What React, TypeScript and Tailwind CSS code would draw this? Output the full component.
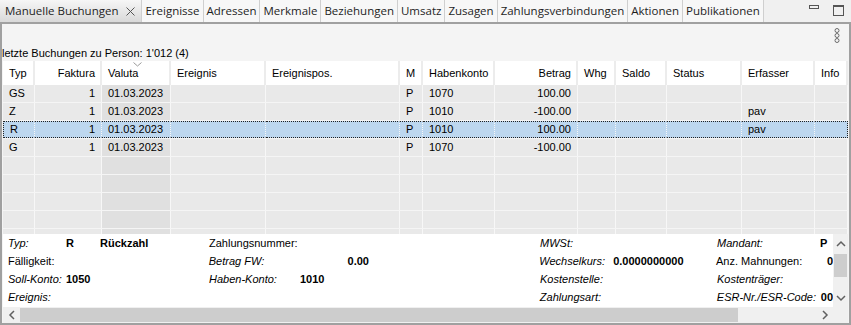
import React from "react";

const tabs = [
  "Ereignisse",
  "Adressen",
  "Merkmale",
  "Beziehungen",
  "Umsatz",
  "Zusagen",
  "Zahlungsverbindungen",
  "Aktionen",
  "Publikationen",
];

type Col = { k: string; w: string; right?: boolean; sorted?: boolean };
const cols: Col[] = [
  { k: "Typ", w: "w-[32px]" },
  { k: "Faktura", w: "w-[67px]", right: true },
  { k: "Valuta", w: "w-[69px]", sorted: true },
  { k: "Ereignis", w: "w-[95px]" },
  { k: "Ereignispos.", w: "w-[134px]" },
  { k: "M", w: "w-[23px]" },
  { k: "Habenkonto", w: "w-[72px]" },
  { k: "Betrag", w: "w-[83px]", right: true },
  { k: "Whg", w: "w-[38px]" },
  { k: "Saldo", w: "w-[51px]" },
  { k: "Status", w: "w-[75px]" },
  { k: "Erfasser", w: "w-[73px]" },
  { k: "Info", w: "w-[33px]" },
];

const rows: string[][] = [
  ["GS", "1", "01.03.2023", "", "", "P", "1070", "100.00", "", "", "", "", ""],
  ["Z", "1", "01.03.2023", "", "", "P", "1010", "-100.00", "", "", "", "pav", ""],
  ["R", "1", "01.03.2023", "", "", "P", "1010", "100.00", "", "", "", "pav", ""],
  ["G", "1", "01.03.2023", "", "", "P", "1070", "-100.00", "", "", "", "", ""],
  ["", "", "", "", "", "", "", "", "", "", "", "", ""],
  ["", "", "", "", "", "", "", "", "", "", "", "", ""],
  ["", "", "", "", "", "", "", "", "", "", "", "", ""],
  ["", "", "", "", "", "", "", "", "", "", "", "", ""],
  ["", "", "", "", "", "", "", "", "", "", "", "", ""],
];

function Kebab() {
  return (
    <svg width="8" height="16" viewBox="0 0 8 16" fill="none">
      <circle cx="4" cy="2.5" r="2" stroke="#6b6b6b" strokeWidth="1" />
      <circle cx="4" cy="7.5" r="2" stroke="#6b6b6b" strokeWidth="1" />
      <circle cx="4" cy="12.5" r="2" stroke="#6b6b6b" strokeWidth="1" />
    </svg>
  );
}

function Chevron({ dir }: { dir: "up" | "down" | "left" | "right" }) {
  const d =
    dir === "up"
      ? "M1 6 L5 2 L9 6"
      : dir === "down"
      ? "M1 2 L5 6 L9 2"
      : dir === "left"
      ? "M6 1 L2 5 L6 9"
      : "M2 1 L6 5 L2 9";
  const w = dir === "up" || dir === "down" ? 10 : 8;
  const h = dir === "up" || dir === "down" ? 8 : 10;
  return (
    <svg width={w} height={h} viewBox={`0 0 ${w} ${h}`} fill="none">
      <path d={d} stroke="#606060" strokeWidth="1.5" />
    </svg>
  );
}

export default function App() {
  return (
    <div className="w-[851px] h-[325px] overflow-hidden bg-[#f0f0f0] text-black [font-family:'Liberation_Sans',Arial,sans-serif]">
      {/* Tab bar */}
      <div className="h-[22px] flex items-stretch bg-[#f0f0f0] [font-family:'Open_Sans',sans-serif] text-[11.5px] text-[#1e1e1e]">
        <div className="flex items-center pl-[5px] pr-[6px] border-r border-[#cfcfcf] bg-gradient-to-b from-[#f6f6f6] to-[#d9d9d9]">
          <span>Manuelle Buchungen</span>
          <span className="ml-[8px] text-[#444]">
            <svg width="9" height="9" viewBox="0 0 9 9">
              <path d="M0.5 0.5 L8.5 8.5 M8.5 0.5 L0.5 8.5" stroke="#555" strokeWidth="1" />
            </svg>
          </span>
        </div>
        {tabs.map((t) => (
          <div
            key={t}
            className="flex items-center px-[3px] border-r border-[#cfcfcf] bg-[#f7f7f7]"
          >
            {t}
          </div>
        ))}
        <div className="flex-1 flex items-start justify-end pt-[5px] pr-[7px] gap-[14px]">
          <div className="w-[10px] h-[4px] border border-[#555] mt-[0px]" />
          <div className="w-[11px] h-[11px] border border-[#555] border-t-2" />
        </div>
      </div>

      {/* Body */}
      <div className="h-[303px] border-2 border-[#a0a0a0] bg-[#f4f4f4] flex flex-col px-[1px]">
        <div className="h-[22px] flex justify-end items-start pt-[4px] pr-[7px]">
          <Kebab />
        </div>
        <div className="h-[15px] text-[11px] leading-[15px] -ml-[1px]">
          letzte Buchungen zu Person: 1'012 (4)
        </div>

        {/* Grid header */}
        <div className="h-[24px] flex bg-white text-[11px]">
          {cols.map((c) => (
            <div
              key={c.k}
              className={`${c.w} shrink-0 relative flex items-center border-r-2 border-[#ececec] ${
                c.right ? "justify-end pr-[5px]" : "pl-[6px]"
              }`}
            >
              {c.sorted && (
                <span className="absolute top-[1px] left-[31px]">
                  <svg width="9" height="5" viewBox="0 0 9 5" fill="none">
                    <path d="M0.5 0.5 L4.5 4 L8.5 0.5" stroke="#9a9a9a" strokeWidth="1" />
                  </svg>
                </span>
              )}
              {c.k}
            </div>
          ))}
        </div>

        {/* Grid rows */}
        <div className="h-[149px] overflow-hidden text-[11px] bg-[#f4f4f4]">
          {rows.map((r, i) => {
            const sel = i === 2;
            return (
              <div key={i} className="h-[18px] flex border-b border-[#f5f5f5]">
                {cols.map((c, j) => (
                  <div
                    key={c.k}
                    className={`${c.w} shrink-0 flex items-center border-r border-[#f7f7f7] ${
                      c.right ? "justify-end pr-[6px]" : "pl-[6px]"
                    } ${
                      sel
                        ? "bg-[#bdd7ef] border-y border-y-[#222] border-dotted"
                        : c.sorted
                        ? "bg-[#e0e0e0]"
                        : "bg-[#e9e9e9]"
                    } ${sel && j === 0 ? "border-l border-l-[#222]" : ""} ${
                      sel && j === cols.length - 1 ? "border-r-[#222]" : ""
                    }`}
                  >
                    {r[j]}
                  </div>
                ))}
              </div>
            );
          })}
        </div>

        {/* Detail + vertical scrollbar */}
        <div className="h-[73px] flex">
          <div className="w-[830px] bg-white overflow-hidden pl-[5px] text-[11px] whitespace-nowrap">
            <div className="h-[18px] flex items-center pt-[1px]">
              <span className="w-[58px] italic">Typ:</span>
              <span className="w-[34px] font-bold">R</span>
              <span className="w-[109px] font-bold">Rückzahl</span>
              <span className="w-[331px]">Zahlungsnummer:</span>
              <span className="w-[177px] italic">MWSt:</span>
              <span className="w-[103px] italic">Mandant:</span>
              <span className="font-bold">P</span>
            </div>
            <div className="h-[18px] flex items-center">
              <span className="w-[201px]">Fälligkeit:</span>
              <span className="w-[139px] italic">Betrag FW:</span>
              <span className="w-[192px] font-bold">0.00</span>
              <span className="w-[74px] italic">Wechselkurs:</span>
              <span className="w-[103px] font-bold">0.0000000000</span>
              <span className="w-[111px]">Anz. Mahnungen:</span>
              <span className="font-bold">0</span>
            </div>
            <div className="h-[18px] flex items-center">
              <span className="w-[58px] italic">Soll-Konto:</span>
              <span className="w-[143px] font-bold">1050</span>
              <span className="w-[91px] italic">Haben-Konto:</span>
              <span className="w-[240px] font-bold">1010</span>
              <span className="w-[177px] italic">Kostenstelle:</span>
              <span className="italic">Kostenträger:</span>
            </div>
            <div className="h-[18px] flex items-center">
              <span className="w-[532px] italic">Ereignis:</span>
              <span className="w-[177px] italic">Zahlungsart:</span>
              <span className="w-[104px] italic">ESR-Nr./ESR-Code:</span>
              <span className="font-bold">00</span>
            </div>
          </div>
          <div className="w-[15px] bg-[#f0f0f0] flex flex-col items-center">
            <div className="h-[18px] flex items-center justify-center pt-[2px]">
              <Chevron dir="up" />
            </div>
            <div className="w-[13px] h-[23px] bg-[#cdcdcd] mt-[2px]" />
            <div className="flex-1" />
            <div className="h-[16px] flex items-center justify-center pb-[2px]">
              <Chevron dir="down" />
            </div>
          </div>
        </div>

        {/* Horizontal scrollbar */}
        <div className="h-[16px] flex">
          <div className="w-[830px] bg-[#f0f0f0] flex items-center">
            <div className="w-[17px] flex justify-center">
              <Chevron dir="left" />
            </div>
            <div className="w-[718px] h-[14px] bg-[#cdcdcd]" />
            <div className="flex-1" />
            <div className="w-[17px] flex justify-center">
              <Chevron dir="right" />
            </div>
          </div>
          <div className="w-[15px] bg-[#f0f0f0]" />
        </div>
      </div>
    </div>
  );
}
